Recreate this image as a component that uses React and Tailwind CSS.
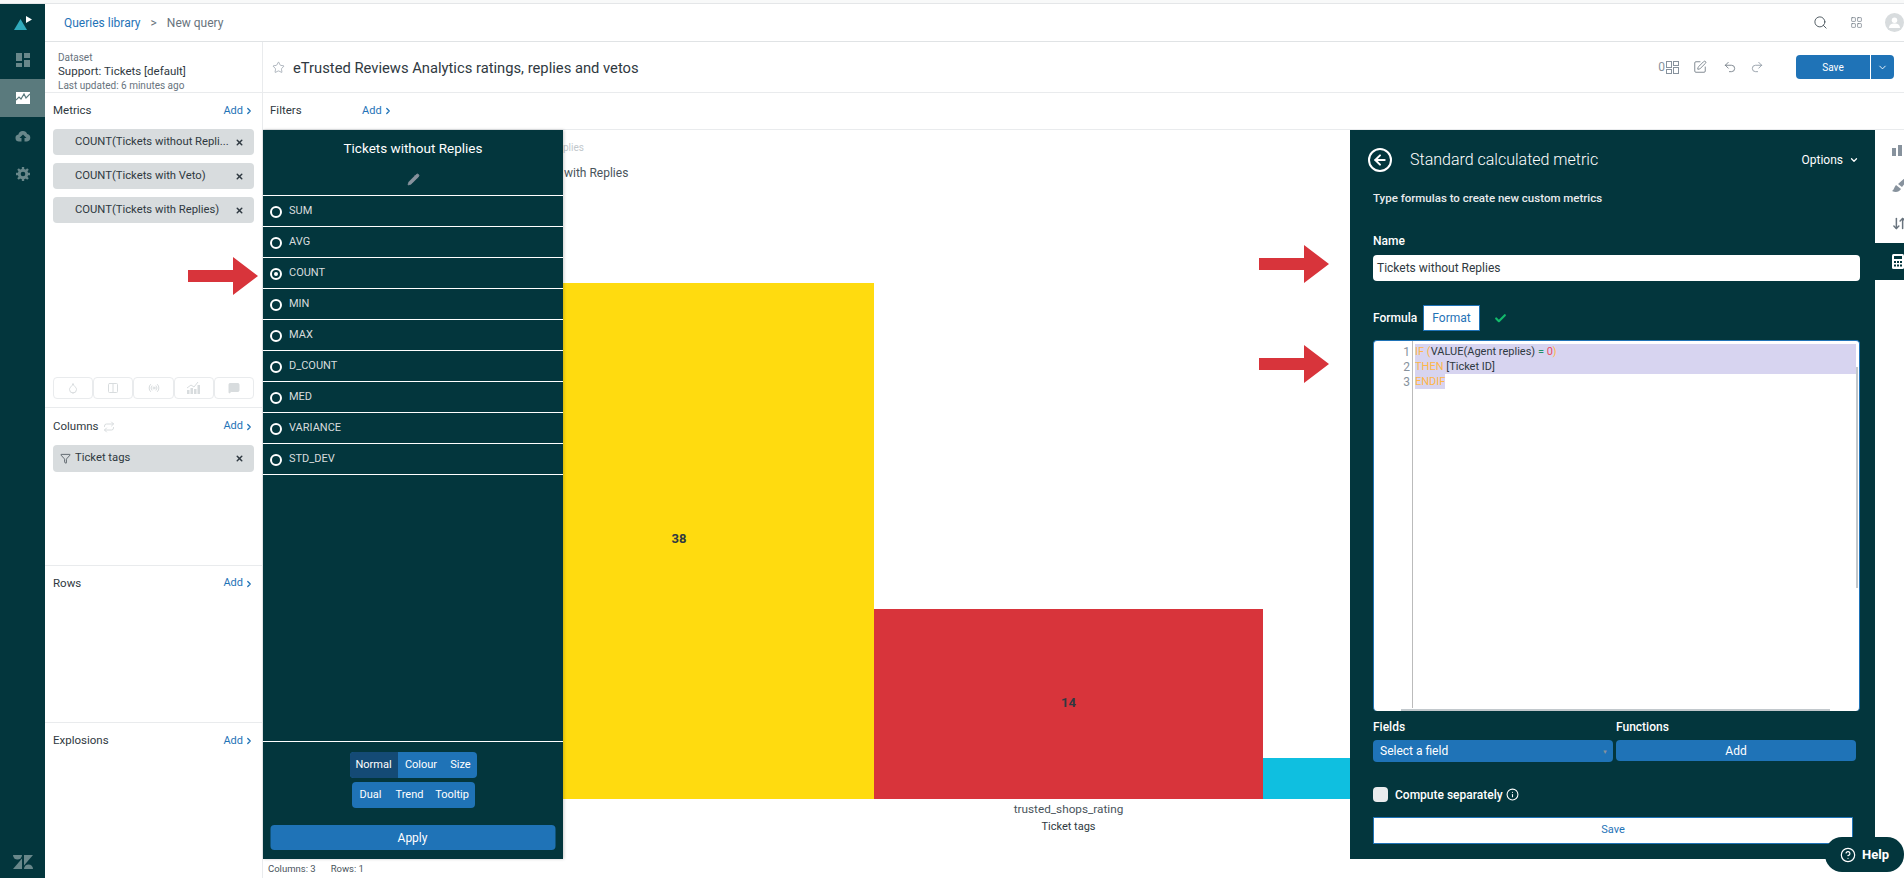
import React from 'react';
import { Search, LayoutGrid, SquarePen, Undo2, Redo2, Star, Pencil, X, Funnel, ChevronRight, ChevronDown, ArrowDownUp, CircleHelp, Check, Droplet, Columns2, Radio, MessageSquare, ArrowLeft, Info, Repeat } from 'lucide-react';

const AGGREGATES = ['SUM', 'AVG', 'COUNT', 'MIN', 'MAX', 'D_COUNT', 'MED', 'VARIANCE', 'STD_DEV'];

const AddLink = () => (
  <span className="flex items-center text-[11px] text-[#1f73b7]">
    Add <ChevronRight size={10} strokeWidth={3} className="ml-px" />
  </span>
);

const SectionHeader = ({ title, height, children }) => (
  <div className={`flex items-center justify-between text-[11.500px] text-[#2f3941] ${height}`}>
    <span className="flex items-center gap-1">{title}{children}</span>
    <AddLink />
  </div>
);

const Chip = ({ label, filter }) => (
  <div className="flex items-center h-[26px] rounded-sm bg-[#d8dcde] text-[11.250px] text-[#2f3941] pr-[10px]">
    <span className="w-[22px] shrink-0 flex justify-end pr-1">
      {filter && <Funnel size={11} strokeWidth={1.5} />}
    </span>
    <span className="flex-1 whitespace-nowrap">{label}</span>
    <X size={9} strokeWidth={4} className="shrink-0" />
  </div>
);

const RedArrow = ({ className }) => (
  <svg viewBox="0 0 70 38" className={`absolute w-[70px] h-[38px] ${className}`}>
    <polygon points="0,13 45,13 45,0 70,19 45,38 45,25 0,25" fill="#d8343b" />
  </svg>
);

const NavIcon = ({ active, children }) => (
  <div className={`h-[38px] flex items-center justify-center ${active ? 'bg-[#5a7a7d]' : ''}`}>{children}</div>
);

const App = () => {
  return (
    <div className="relative h-screen w-full overflow-hidden bg-white flex flex-col font-['Roboto',sans-serif]">
      <div className="h-[4px] border-b border-[#e4e6e8] bg-[#f8f9f9]" />
      <div className="flex flex-1 min-h-0">
        {/* Side navigation */}
        <nav className="w-[45px] bg-[#03363d] flex flex-col">
          <div className="h-[37px] flex items-center justify-center">
            <svg width="20" height="16" viewBox="0 0 20 16">
              <polygon points="1,15 7.500,4 14,15" fill="#30aabc" />
              <polygon points="13,1 19,4.500 13,8" fill="#ffffff" />
            </svg>
          </div>
          <NavIcon>
            <svg width="14" height="14" viewBox="0 0 14 14" fill="#68878a">
              <rect x="0" y="0" width="6" height="8" />
              <rect x="8" y="0" width="6" height="5" />
              <rect x="0" y="10" width="6" height="4" />
              <rect x="8" y="7" width="6" height="7" />
            </svg>
          </NavIcon>
          <NavIcon active>
            <svg width="14" height="14" viewBox="0 0 14 14">
              <rect x="0" y="1" width="14" height="12" fill="#ffffff" />
              <polyline points="0,9 3,6 5,8 8,3 10,7 14,3" fill="none" stroke="#5a7a7d" strokeWidth="1.200" />
            </svg>
          </NavIcon>
          <NavIcon>
            <svg width="16" height="12" viewBox="0 0 16 12" fill="#68878a">
              <path d="M4 11.500a3.500 3.500 0 0 1-.6-6.950A4.600 4.600 0 0 1 12.200 4 3.800 3.800 0 0 1 12 11.500H9.500V8h2L8 4.500 4.500 8h2v3.500z" />
            </svg>
          </NavIcon>
          <NavIcon>
            <svg width="14" height="14" viewBox="0 0 24 24" fill="none" stroke="#68878a" strokeWidth="5">
              <circle cx="12" cy="12" r="6.500" />
              <path d="M12 0v5M12 19v5M0 12h5M19 12h5M3.500 3.500l3.500 3.500M17 17l3.500 3.500M3.500 20.500L7 17M17 7l3.500-3.500" strokeWidth="4" />
            </svg>
          </NavIcon>
          <div className="mt-auto mb-[9px] flex justify-center">
            <svg width="20" height="14" viewBox="0 0 20 14" fill="#68878a">
              <path d="M0 0h9a4.500 4.500 0 0 1-9 0z" />
              <polygon points="9,3.500 9,14 0,14" />
              <polygon points="11,0 20,0 11,10.500" />
              <path d="M11 14a4.500 4.500 0 0 1 9 0z" />
            </svg>
          </div>
        </nav>

        <div className="flex-1 min-w-0 flex flex-col">
          {/* Breadcrumb bar */}
          <header className="h-[38px] shrink-0 border-b border-[#e0e3e5] flex items-center text-[12px]">
            <span className="ml-[19px] text-[#1f73b7]">Queries library</span>
            <span className="ml-[10px] text-[#68737d]">&gt;</span>
            <span className="ml-[10px] text-[#68737d]">New query</span>
            <div className="ml-auto flex items-center">
              <Search size={15} strokeWidth={1.5} className="text-[#49545c]" />
              <LayoutGrid size={13} strokeWidth={1.2} className="ml-[22px] text-[#68737d]" />
              <span className="ml-[22px] w-[19px] h-[19px] rounded-full bg-[#d8dcde] flex items-center justify-center shrink-0">
                <svg width="11" height="11" viewBox="0 0 12 12" fill="#ffffff">
                  <circle cx="6" cy="3.500" r="3" />
                  <path d="M0 12c0-3.500 2.500-5 6-5s6 1.500 6 5z" />
                </svg>
              </span>
            </div>
          </header>

          {/* Dataset and query title */}
          <div className="h-[51px] shrink-0 border-b border-[#e9ebed] flex">
            <div className="w-[218px] border-r border-[#e9ebed] pl-[13px] pt-[10px] leading-[14px]">
              <div className="text-[10px] text-[#68737d] leading-[12px]">Dataset</div>
              <div className="text-[11.500px] text-[#2f3941]">Support: Tickets [default]</div>
              <div className="text-[10px] text-[#68737d] mt-px">Last updated: 6 minutes ago</div>
            </div>
            <div className="flex-1 flex items-center pl-[9px]">
              <Star size={13} strokeWidth={1.2} className="text-[#87929d]" />
              <span className="ml-2 pt-[2px] text-[14.750px] text-[#2f3941]">eTrusted Reviews Analytics ratings, replies and vetos</span>
              <div className="ml-auto flex items-center text-[#87929d]">
                <span className="text-[12px] text-[#87929d]">0</span>
                <svg width="13" height="13" viewBox="0 0 13 13" fill="none" stroke="#87929d" className="ml-px">
                  <rect x="0.500" y="0.500" width="5" height="6" />
                  <rect x="7.500" y="0.500" width="5" height="4" />
                  <rect x="0.500" y="8.500" width="5" height="4" />
                  <rect x="7.500" y="6.500" width="5" height="6" />
                </svg>
                <SquarePen size={14} strokeWidth={1.4} className="ml-[14px] text-[#68737d]" />
                <Undo2 size={14} strokeWidth={1.4} className="ml-[16px] text-[#68737d]" />
                <Redo2 size={14} strokeWidth={1.4} className="ml-[13px] text-[#87929d]" />
                <div className="ml-[32px] mr-[10px] flex h-[24px] rounded-sm overflow-hidden text-white text-[10px]">
                  <span className="w-[74px] bg-[#1f73b7] flex items-center justify-center">Save</span>
                  <span className="w-[23px] ml-px bg-[#1f73b7] flex items-center justify-center">
                    <ChevronDown size={11} />
                  </span>
                </div>
              </div>
            </div>
          </div>

          <div className="flex-1 min-h-0 flex">
            {/* Metrics, columns, rows, explosions */}
            <aside className="w-[218px] shrink-0 border-r border-[#e9ebed] flex flex-col">
              <section className="h-[315px] border-b border-[#e9ebed] px-2 flex flex-col">
                <SectionHeader title="Metrics" height="h-[36px]" />
                <div className="flex flex-col gap-2">
                  <Chip label="COUNT(Tickets without Repli..." />
                  <Chip label="COUNT(Tickets with Veto)" />
                  <Chip label="COUNT(Tickets with Replies)" />
                </div>
                <div className="mt-auto mb-2 flex h-[22px] text-[#d8dcde]">
                  <span className="flex-1 border border-[#e9ebed] rounded-sm flex items-center justify-center"><Droplet size={12} /></span>
                  <span className="flex-1 border border-[#e9ebed] rounded-sm flex items-center justify-center"><Columns2 size={12} /></span>
                  <span className="flex-1 border border-[#e9ebed] rounded-sm flex items-center justify-center"><Radio size={12} /></span>
                  <span className="flex-1 border border-[#e9ebed] rounded-sm flex items-center justify-center">
                    <svg width="13" height="12" viewBox="0 0 13 12" fill="#d8dcde">
                      <rect x="0" y="8" width="2.500" height="4" />
                      <rect x="3.500" y="6" width="2.500" height="6" />
                      <rect x="7" y="7" width="2.500" height="5" />
                      <rect x="10.500" y="3" width="2.500" height="9" />
                      <path d="M0 6l4-3 3 2 4-5" fill="none" stroke="#d8dcde" />
                    </svg>
                  </span>
                  <span className="flex-1 border border-[#e9ebed] rounded-sm flex items-center justify-center"><MessageSquare size={12} fill="#d8dcde" /></span>
                </div>
              </section>
              <section className="h-[158px] border-b border-[#e9ebed] px-2">
                <SectionHeader title="Columns" height="h-[37px]">
                  <Repeat size={12} className="text-[#d8dcde]" />
                </SectionHeader>
                <div className="[&>div]:h-[27px]">
                  <Chip label="Ticket tags" filter />
                </div>
              </section>
              <section className="h-[157px] border-b border-[#e9ebed] px-2">
                <SectionHeader title="Rows" height="h-[35px]" />
              </section>
              <section className="flex-1 px-2">
                <SectionHeader title="Explosions" height="h-[36px]" />
              </section>
            </aside>

            <div className="flex-1 min-w-0 flex flex-col">
              {/* Filters */}
              <div className="h-[37px] shrink-0 border-b border-[#e9ebed] flex items-center pl-[7px] text-[11.500px] text-[#2f3941]">
                <span className="w-[92px]">Filters</span>
                <AddLink />
              </div>

              <div className="h-[729px] shrink-0 flex">
                {/* Aggregation picker */}
                <div className="w-[300px] shrink-0 bg-[#03363d] flex flex-col relative z-10 shadow-[1px_0_3px_rgba(0,0,0,0.2)]">
                  <div className="h-[66px] shrink-0 border-b border-white flex flex-col items-center pt-[8px]">
                    <span className="text-[13.500px] leading-5 text-white">Tickets without Replies</span>
                    <Pencil size={13} strokeWidth={1.5} fill="#87929d" className="mt-[15px] text-[#87929d]" />
                  </div>
                  {AGGREGATES.map(name => (
                    <div key={name} className="h-[31px] shrink-0 border-b border-white flex items-center pl-[7px] pt-px text-[11px] text-[#d8dcde]">
                      <span className="w-[12px] h-[12px] rounded-full border-2 border-white flex items-center justify-center">
                        {name === 'COUNT' && <span className="w-[4px] h-[4px] rounded-full bg-white" />}
                      </span>
                      <span className="ml-[7px]">{name}</span>
                    </div>
                  ))}
                  <div className="flex-1" />
                  <div className="h-[118px] shrink-0 border-t border-white flex flex-col items-center pt-[10px]">
                    <div className="flex h-[26px] rounded-sm overflow-hidden bg-[#1f73b7] text-[11px] text-white">
                      <span className="w-[48px] bg-[#144a75] flex items-center justify-center">Normal</span>
                      <span className="w-[47px] flex items-center justify-center">Colour</span>
                      <span className="w-[32px] flex items-center justify-center">Size</span>
                    </div>
                    <div className="mt-[4px] flex h-[26px] rounded-sm overflow-hidden bg-[#1f73b7] text-[11px] text-white">
                      <span className="w-[38px] flex items-center justify-center">Dual</span>
                      <span className="w-[40px] flex items-center justify-center">Trend</span>
                      <span className="w-[45px] flex items-center justify-center">Tooltip</span>
                    </div>
                    <div className="mt-[17px] w-[285px] h-[25px] rounded-sm bg-[#1f73b7] text-white text-[12px] flex items-center justify-center -translate-x-[0.500px]">Apply</div>
                  </div>
                </div>

                {/* Chart */}
                <div className="w-[787px] shrink-0 overflow-hidden flex flex-col">
                  <div className="h-[33px] pt-[11px] text-[10px] leading-[14px] text-[#c2c8cc] whitespace-nowrap">plies</div>
                  <div className="h-[20px] flex items-center text-[12px] text-[#49545c] whitespace-nowrap pl-px">with Replies</div>
                  <div className="h-[616px] flex flex-col justify-end">
                    <div className="h-[516px] flex items-end shrink-0">
                      <div className="w-[311px] h-[516px] bg-[#ffdb0f] flex items-center justify-center pr-[79px] pb-[4px] text-[13px] font-bold text-[#2f3941]">38</div>
                      <div className="w-[389px] h-[190px] bg-[#d8343b] flex items-center justify-center pb-[3px] text-[13px] font-bold text-[#2f3941]">14</div>
                      <div className="flex-1 h-[41px] bg-[#0fbfe0]" />
                    </div>
                  </div>
                  <div className="flex">
                    <div className="w-[311px]" />
                    <div className="w-[389px] text-center">
                      <div className="mt-[2px] text-[11.750px] leading-[16px] text-[#49545c]">trusted_shops_rating</div>
                      <div className="pt-px text-[11px] leading-[17px] text-[#2f3941]">Ticket tags</div>
                    </div>
                  </div>
                </div>

                {/* Calculated metric editor */}
                <div className="w-[525px] shrink-0 bg-[#03363d] pl-[23px] pr-[15px] text-white">
                  <div className="h-[60px] flex items-center -ml-[5px]">
                    <span className="w-[24px] h-[24px] rounded-full border-2 border-white flex items-center justify-center">
                      <ArrowLeft size={16} strokeWidth={3} />
                    </span>
                    <span className="ml-[18px] text-[16px] font-light">Standard calculated metric</span>
                    <span className="ml-auto flex items-center text-[12px] mr-[1px]">
                      Options <ChevronDown size={10} strokeWidth={3} className="ml-[6px]" />
                    </span>
                  </div>
                  <div className="h-[16px] pt-px flex items-center text-[11.500px] font-medium text-[#e9ebed]">Type formulas to create new custom metrics</div>
                  <div className="mt-[27px] h-[16px] flex items-center text-[12px] font-medium">Name</div>
                  <div className="mt-[6px] h-[26px] rounded bg-white text-[12px] text-[#2f3941] flex items-center pl-1">Tickets without Replies</div>
                  <div className="mt-[24px] h-[26px] flex items-center text-[12px] font-medium">
                    <span className="w-[50px]">Formula</span>
                    <span className="w-[57px] h-[26px] bg-white border border-[#1f73b7] text-[#1f73b7] text-[12px] font-normal flex items-center justify-center">Format</span>
                    <Check size={13} strokeWidth={4} className="ml-[14px] text-[#13ba6b]" />
                  </div>
                  <div className="relative mt-[9px] h-[371px] rounded-sm bg-white border-t border-x border-[#1f73b7] flex text-[11px] leading-[15px]">
                    <div className="w-[39px] mb-[3px] border-r border-[#bbbbbb] pt-[4px] pr-[2px] text-right text-[12px] text-[#87929d]">
                      <div>1</div>
                      <div>2</div>
                      <div>3</div>
                    </div>
                    <div className="flex-1 pt-[3px] pl-[2px] pr-[3px] text-[#2f3941] whitespace-pre">
                      <div className="bg-[#d7d4f0]">
                        <span className="text-[#ffb648]">IF (</span>VALUE(Agent replies) <span className="text-[#228f67]">=</span> <span className="text-[#eb4962]">0</span><span className="text-[#ffb648]">)</span>
                      </div>
                      <div className="bg-[#d7d4f0]">
                        <span className="text-[#ffb648]">THEN</span> [Ticket ID]
                      </div>
                      <div className="bg-[#d7d4f0] w-fit text-[#ffb648]">ENDIF</div>
                    </div>
                    <div className="absolute right-px top-[26px] w-[2px] h-[221px] bg-[#c2c8cc]" />
                    <div className="absolute left-[27px] bottom-0 w-[429px] h-[2px] bg-[#c2c8cc]" />
                  </div>
                  <div className="mt-[7px] h-[16px] grid grid-cols-[240px_240px] gap-x-[3px] items-center text-[12px] font-medium">
                    <span>Fields</span>
                    <span>Functions</span>
                  </div>
                  <div className="mt-[6px] grid grid-cols-[240px_240px] gap-x-[3px] items-start text-[12px]">
                    <div className="h-[22px] rounded bg-[#1f73b7] flex items-center justify-between pl-[7px] pr-[5px]">
                      Select a field
                      <span className="text-[6px] text-[#87929d]">▼</span>
                    </div>
                    <div className="h-[21px] rounded-sm bg-[#1f73b7] flex items-center justify-center">Add</div>
                  </div>
                  <div className="mt-[25px] h-[15px] flex items-center text-[12px] font-medium">
                    <span className="w-[15px] h-[15px] rounded-sm bg-[#e9ebed]" />
                    <span className="ml-[7px]">Compute separately</span>
                    <Info size={13} strokeWidth={2} className="ml-[3px]" />
                  </div>
                  <div className="mt-[15px] w-[480px] h-[27px] bg-white border border-[#1f73b7] text-[#1f73b7] text-[11px] flex items-center justify-center">Save</div>
                </div>

                {/* Right rail */}
                <div className="flex-1 min-w-0 overflow-hidden text-[#68737d]">
                  <div className="h-[37.500px] pl-[17px] flex items-center">
                    <svg width="18" height="14" viewBox="0 0 18 14" fill="#87929d" className="shrink-0">
                      <rect x="0" y="6" width="4" height="8" />
                      <rect x="6" y="3" width="4" height="11" />
                      <rect x="12" y="0" width="4" height="14" />
                    </svg>
                  </div>
                  <div className="h-[37.500px] pl-[17px] flex items-center">
                    <svg width="18" height="18" viewBox="0 0 18 18" fill="#87929d" className="shrink-0">
                      <path d="M0 14c2-1 2-4 4-6l5 4c-2 3-5 4-9 2zM6 7l8-7 3 1-7 9z" />
                    </svg>
                  </div>
                  <div className="h-[37.500px] pl-[17px] flex items-center">
                    <ArrowDownUp size={15} strokeWidth={2.4} className="shrink-0" />
                  </div>
                  <div className="h-[37.500px] pl-[17px] flex items-center bg-[#03363d]">
                    <svg width="12" height="15" viewBox="0 0 12 15" className="shrink-0">
                      <rect x="0" y="0" width="12" height="15" rx="1.500" fill="#ffffff" />
                      <rect x="2" y="2" width="8" height="3" fill="#03363d" />
                      <path d="M2 7h2v2H2zM5 7h2v2H5zM8 7h2v2H8zM2 10.500h2v2H2zM5 10.500h2v2H5zM8 10.500h2v2H8z" fill="#03363d" />
                    </svg>
                  </div>
                </div>
              </div>

              <div className="flex-1 flex items-center pl-[5px] pt-px text-[9.500px] text-[#49545c]">
                <span>Columns: 3</span>
                <span className="ml-[15px]">Rows: 1</span>
              </div>
            </div>
          </div>
        </div>
      </div>

      {/* Annotations and help button lie over the page */}
      <RedArrow className="left-[188px] top-[257px]" />
      <RedArrow className="left-[1259px] top-[245px]" />
      <RedArrow className="left-[1259px] top-[345px]" />
      <div className="absolute right-0 bottom-[6px] w-[79px] h-[35px] rounded-[17px] bg-[#03363d] text-white flex items-center justify-center gap-[6px] text-[13px] font-bold">
        <CircleHelp size={16} strokeWidth={1.8} />
        Help
      </div>
    </div>
  );
};

export default App;
